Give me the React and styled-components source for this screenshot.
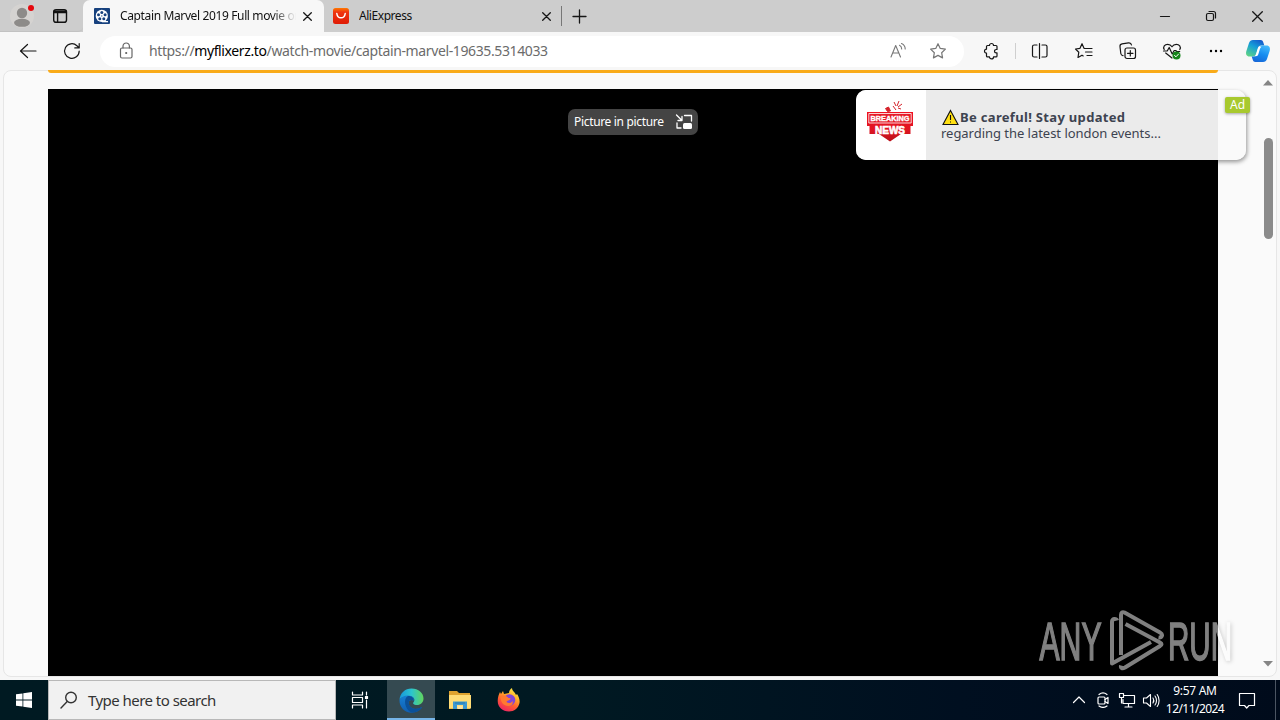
import React from "react";
import styled, { createGlobalStyle } from "styled-components";

const Global = createGlobalStyle`
  * { box-sizing: border-box; }
  html, body { margin: 0; overflow: hidden; }
  body { font-family: "Noto Sans", "Open Sans", sans-serif; color: #111; }
  svg { display: block; flex: none; }
`;

const Desktop = styled.div`
  position: relative;
  width: 1280px;
  height: 720px;
  display: flex;
  flex-direction: column;
  background: #f7f7f7;
  overflow: hidden;
`;
const TitleBar = styled.header`
  height: 32px;
  display: flex;
  background: #cdcdcd;
`;
const Leading = styled.div`
  width: 83px;
  padding: 3px 0 0 9px;
  display: flex;
  gap: 10px;
  border-bottom: 1px solid #c2c2c2;
  border-radius: 0 0 5px 0;
`;
const Tab = styled.div`
  width: ${(p) => p.$width}px;
  height: 32px;
  display: flex;
  align-items: center;
  padding: 0 ${(p) => (p.$active ? 12 : 10)}px 0 ${(p) => (p.$active ? 11 : 9)}px;
  background: ${(p) => (p.$active ? "#f7f7f7" : "transparent")};
  border-radius: ${(p) => (p.$active ? "7px 7px 0 0" : "0")};
`;
const TabTitle = styled.span`
  flex: 1;
  min-width: 0;
  margin: 0 6px 0 ${(p) => p.$gap}px;
  font-size: 12px;
  letter-spacing: ${(p) => p.$spacing}px;
  line-height: 18px;
  white-space: nowrap;
  overflow: hidden;
  mask-image: ${(p) => (p.$fade ? "linear-gradient(90deg, #000 152px, transparent 176px)" : "none")};
`;
const TabRule = styled.i`
  width: 1px;
  height: 20px;
  margin: 6px 7px 0 0;
  background: #777;
`;
const NewTabButton = styled.div`
  width: 20px;
  height: 32px;
  display: grid;
  place-items: center;
`;
const WindowButtons = styled.div`
  margin-left: auto;
  display: flex;
`;
const WindowButton = styled.div`
  width: 46px;
  height: 32px;
  display: grid;
  place-items: center;
`;
const Toolbar = styled.div`
  height: 38px;
  display: flex;
  align-items: center;
  padding: 0 2px 0 6px;
`;
const ToolButton = styled.div`
  width: ${(p) => p.$width || 44}px;
  height: 38px;
  display: grid;
  place-items: center;
`;
const ToolRule = styled.i`
  width: 1px;
  height: 16px;
  margin: 0 2px;
  background: #cfcfcf;
`;
const AddressBar = styled.div`
  width: 864px;
  height: 31px;
  margin: 0 5px 0 6px;
  padding: 0 6px 0 16px;
  display: flex;
  align-items: center;
  background: #fff;
  border-radius: 16px;
`;
const Url = styled.span`
  flex: 1;
  margin-left: 13px;
  font-size: 14px;
  letter-spacing: ${(p) => p.$spacing || 0}px;
  line-height: 20px;
  color: #6b6b6b;
  b { font-weight: 400; color: #000; }
`;
const Page = styled.main`
  height: 607px;
  margin: 0 3px;
  display: flex;
  background: #fafafa;
  border: 1px solid #e6e6e6;
  border-radius: 8px;
`;
const Content = styled.div`
  width: 1170px;
  margin: -1px 0 0 44px;
  display: flex;
  flex-direction: column;
`;
const Banner = styled.div`
  height: 3px;
  background: #f9ab19;
  border-radius: 0 0 3px 3px;
`;
const Player = styled.div`
  height: 587px;
  margin-top: 16px;
  padding-top: 20px;
  display: flex;
  justify-content: center;
  align-items: flex-start;
  background: #000;
`;
const PipButton = styled.div`
  width: 130px;
  height: 26px;
  padding: 0 5px 1px 6px;
  display: flex;
  align-items: center;
  justify-content: space-between;
  background: #444;
  border-radius: 7px;
  color: #fff;
  font-size: 12px;
  letter-spacing: -0.33px;
  white-space: nowrap;
`;
const Scrollbar = styled.div`
  width: 14px;
  margin: 0 1px 0 auto;
  padding: 9px 0 9px;
  display: flex;
  flex-direction: column;
  align-items: center;
`;
const Thumb = styled.div`
  width: 9px;
  height: 101px;
  margin: 52px 0 auto;
  border-radius: 5px;
  background: #8b8b8b;
`;
const Notice = styled.aside`
  position: absolute;
  left: 856px;
  top: 90px;
  width: 390px;
  height: 70px;
  display: flex;
  align-items: stretch;
  border-radius: 10px;
  overflow: hidden;
  background: rgba(250, 250, 250, 0.94);
  box-shadow: 1px 2px 4px rgba(0, 0, 0, 0.4);
`;
const NoticeImage = styled.div`
  width: 70px;
  padding: 9px 0 0 10px;
  background: #fff;
`;
const NoticeBody = styled.div`
  padding: 19px 0 0 15px;
  font-size: 13px;
  line-height: 16px;
  color: #3d4350;
  white-space: nowrap;
`;
const NoticeTitle = styled.div`
  height: 16px;
  display: flex;
  align-items: center;
  gap: 1px;
  font-weight: 700;
  letter-spacing: ${(p) => p.$spacing}px;
`;
const NoticeText = styled.div`
  letter-spacing: ${(p) => p.$spacing}px;
`;
const AdBadge = styled.div`
  position: absolute;
  left: 1225px;
  top: 97px;
  width: 25px;
  height: 16px;
  background: #a8c92e;
  border-radius: 2px;
  box-shadow: 0 1px 3px rgba(0, 0, 0, 0.35);
  color: #fff;
  font-size: 12px;
  line-height: 16px;
  text-align: center;
`;
const Watermark = styled.div`
  position: absolute;
  left: 1034px;
  top: 606px;
  opacity: 0.5;
  filter: drop-shadow(1px 1px 2px rgba(0, 0, 0, 0.4));
`;
const Taskbar = styled.footer`
  height: 40px;
  margin-top: auto;
  display: flex;
  background: linear-gradient(90deg, #001a22 0, #001922 45%, #000f20 75%, #000b1b 100%);
  color: #fff;
`;
const TaskButton = styled.div`
  width: ${(p) => p.$width}px;
  height: 40px;
  display: grid;
  place-items: center;
  background: ${(p) => (p.$active ? "#354a51" : "transparent")};
  box-shadow: ${(p) => (p.$active ? "inset 0 -2px #76b5e8" : "none")};
`;
const TaskView = styled.div`
  width: 51px;
  padding: 11px 0 0 15px;
`;
const SearchBox = styled.div`
  width: 288px;
  height: 40px;
  padding-left: 11px;
  display: flex;
  align-items: center;
  gap: 10px;
  background: #f1f1f1;
  border: 1px solid #b8b8b8;
  color: #333;
  font-size: 15px;
  letter-spacing: ${(p) => p.$spacing}px;
`;
const Tray = styled.div`
  margin-left: auto;
  display: flex;
`;
const Clock = styled.div`
  width: 64px;
  padding-top: 2px;
  font-size: 12px;
  line-height: 18px;
  letter-spacing: -0.55px;
  text-align: center;
  white-space: nowrap;
`;
const Time = styled.div`
  letter-spacing: -0.3px;
`;
const ShowDesktop = styled.div`
  width: 5px;
  margin-left: 8px;
  border-left: 1px solid #4b5562;
`;

const Line = ({ w = 20, h = w, color = "#161616", sw = 1.2, children }) => (
  <svg width={w} height={h} viewBox={`0 0 ${w} ${h}`} fill="none" stroke={color} strokeWidth={sw} strokeLinecap="round" strokeLinejoin="round">
    {children}
  </svg>
);
const Close = ({ size = 9 }) => (
  <Line w={size} sw={1.3}>
    <path d={`M.7 .7l${size - 1.4} ${size - 1.4}M${size - 0.7} .7L.7 ${size - 0.7}`} />
  </Line>
);
const starPath = "M10 2.7l2.25 4.7 5.15.7-3.75 3.6.9 5.15L10 14.4l-4.55 2.45.9-5.15L2.6 8.1l5.15-.7z";

const ProfileIcon = () => (
  <svg width="28" height="26" viewBox="0 0 28 26">
    <circle cx="13" cy="13" r="12" fill="#d5d3d1" />
    <circle cx="13" cy="10" r="5.2" fill="#8d8b89" />
    <ellipse cx="13" cy="19.8" rx="8" ry="4" fill="#8d8b89" />
    <circle cx="22" cy="5" r="3" fill="#e5080e" />
  </svg>
);
const WorkspaceIcon = () => (
  <Line w={26} sw={1.4} color="#111">
    <rect x="6.7" y="6.7" width="12.8" height="12.6" rx="2.4" />
    <path d="M6.8 8.3h12.6M6.8 9.5h12.6M10.6 9v10" />
  </Line>
);
const FilmIcon = () => (
  <svg width="16" height="16" viewBox="0 0 16 16">
    <rect width="16" height="16" rx="1" fill="#17417e" />
    <circle cx="7.8" cy="7.9" r="6.1" fill="#fff" />
    <path d="M8 13h6v1.3H8z" fill="#fff" />
    <g fill="#17417e">
      <circle cx="7.8" cy="4.5" r="1.5" /><circle cx="4.5" cy="6.8" r="1.5" />
      <circle cx="11.1" cy="6.8" r="1.5" /><circle cx="5.8" cy="10.7" r="1.5" />
      <circle cx="9.8" cy="10.7" r="1.5" /><circle cx="7.8" cy="7.9" r=".6" />
    </g>
  </svg>
);
const AliIcon = () => (
  <svg width="16" height="16" viewBox="0 0 16 16">
    <defs><linearGradient id="ali" x2="0" y2="1"><stop stopColor="#ff7a00" /><stop offset=".25" stopColor="#ef3510" /><stop offset="1" stopColor="#df1b05" /></linearGradient></defs>
    <rect width="16" height="16" rx="2.5" fill="url(#ali)" />
    <path d="M3.8 5.5c.7 5.7 7.7 5.7 8.4 0" fill="none" stroke="#fff" strokeWidth="1.5" strokeLinecap="round" />
  </svg>
);
const CopilotIcon = () => (
  <svg width="26" height="26" viewBox="0 0 26 26">
    <defs>
      <linearGradient id="cpA" x1=".8" y1="0" x2=".2" y2="1"><stop stopColor="#1557cc" /><stop offset=".45" stopColor="#159fd8" /><stop offset="1" stopColor="#5cd287" /></linearGradient>
      <linearGradient id="cpB" x1=".7" y1="0" x2=".3" y2="1"><stop stopColor="#42b8fb" /><stop offset=".5" stopColor="#168df0" /><stop offset="1" stopColor="#1667d8" /></linearGradient>
    </defs>
    <path d="M8 2h7.500c2 0 2.400 1.300 3 3l.8 2.600h-3c-2 0-3 1-3.600 3l-1.500 5c-.6 1.900-1.600 2.900-3.500 2.900H4.500C1.500 18.500 .5 16 1.300 13.200L4 5c.7-2 2-3 4-3z" fill="url(#cpA)" />
    <path d="M18 24h-7.500c-2 0-2.400-1.300-3-3l-.8-2.600h2c2 0 3-1 3.600-3l1.500-5c.6-1.900 1.600-2.900 3.500-2.900h4.200c3 0 4 2.500 3.200 5.300L22 21c-.7 2-2 3-4 3z" fill="url(#cpB)" />
    <path d="M15.500 8.500h-.8c-1 .3-1.400 1.100-1.800 2.300l-1.900 6c-.2.700-.6 1.200-1 1.500h.8c1.500 0 2.100-.7 2.600-2.200l1.500-5c.3-1 .8-1.800 1.600-2.300z" fill="#fff" />
  </svg>
);
const Arrow = ({ down }) => (
  <svg width="10" height="6" viewBox="0 0 10 6"><path d={down ? "M0 0h10L5 5.500z" : "M0 5.500h10L5 0z"} fill="#858585" /></svg>
);
const NewsIcon = () => (
  <svg width="48" height="44" viewBox="0 0 48 44">
    <defs><linearGradient id="news" x2="0" y2="1"><stop stopColor="#f01020" /><stop offset=".6" stopColor="#e01522" /><stop offset="1" stopColor="#b9111a" /></linearGradient></defs>
    <path d="M19.500 9.500l3-1.500 2 4-3 .5zM28 3l2 4M33 2l-2 5M36 5l-4 3M35 10l-3-1M27 7l3 4" fill="#d5222a" stroke="#d5222a" strokeWidth="1" />
    <path d="M1 13h46v14h-2.500v8H35l-11 7.500L13 35H3.500v-8H1z" fill="url(#news)" />
    <path d="M2.800 14.500h42.400v9.500H2.800z" fill="#e51b28" stroke="#fff" strokeWidth=".8" />
    <g fill="#fff" fontFamily="Liberation Sans, sans-serif" fontWeight="900" stroke="#fff">
      <text x="4.500" y="22" fontSize="8" strokeWidth=".4" textLength="39" lengthAdjust="spacingAndGlyphs">BREAKING</text>
      <text x="9" y="35" fontSize="11.500" strokeWidth=".7" textLength="30" lengthAdjust="spacingAndGlyphs">NEWS</text>
    </g>
  </svg>
);
const WarningIcon = () => (
  <svg width="18" height="17" viewBox="0 0 18 17">
    <path d="M9.500 1.500L17 15.500H2z" fill="#ffdf12" stroke="#111" strokeWidth="1.100" />
    <path d="M9.500 6v5M9.500 12.500v1" stroke="#111" strokeWidth="1.100" />
  </svg>
);
const AnyRunMark = () => (
  <svg width="216" height="70" viewBox="0 0 216 70">
    <g fill="#fff" stroke="#fff" strokeWidth="1.600" fontFamily="Liberation Sans Narrow, Liberation Sans, sans-serif" fontSize="53">
      <text x="5.500" y="54" textLength="62" lengthAdjust="spacingAndGlyphs">ANY</text>
      <text x="134" y="54" textLength="64" lengthAdjust="spacingAndGlyphs">RUN</text>
    </g>
    <g fill="none" stroke="#fff" strokeWidth="4" strokeLinejoin="round">
      <path d="M83 14.500c-.5-2.500-5-2-5 1.500v41.500L117 36" />
      <path d="M87 49V9c0-2.500 1.500-3.500 3.500-2.400L126 26.500c3.500 2 2 5.500-1.500 5" />
      <path d="M91.500 18L126 36.500c2 1 2 2.500 0 3.500L91 61.500c-3 1.700-4.500.5-4-2" />
    </g>
  </svg>
);
const WindowsIcon = () => (
  <svg width="16" height="16" viewBox="0 0 16 16" fill="#fff"><path d="M0 2.300l6.500-.9v6.100H0zM7.300 1.300L16 0v7.500H7.300zM0 8.400h6.500v6.200L0 13.700zM7.300 8.400H16V16l-8.700-1.300z" /></svg>
);
const EdgeIcon = () => (
  <svg width="25" height="25" viewBox="0 0 25 25">
    <defs>
      <linearGradient id="edA" x1="0" x2="1"><stop stopColor="#1697dc" /><stop offset=".5" stopColor="#2cc4ce" /><stop offset="1" stopColor="#62d55c" /></linearGradient>
      <linearGradient id="edB" x2="0" y2="1"><stop stopColor="#167fd3" /><stop offset="1" stopColor="#105eb0" /></linearGradient>
    </defs>
    <path d="M.5 12C1 5 6 .5 12.500.5c7 0 12 4.500 12 10 0 4-3 6.500-6.500 6.500-3.300 0-4.500-1.500-3.500-2.700 2.500-3-.5-6.300-4.500-6.300C5 8 1.500 10 .5 12z" fill="url(#edA)" />
    <path d="M.5 12C2 9 5 7.500 9 7.500c4.500 0 7 3 5.500 5-4-2-6 2-4.200 5 2.300 4 8 4.500 12.700 1.500-2.200 4-6 5.700-10.500 5.700C5.500 24.700.3 19 .5 12z" fill="url(#edB)" />
    <path d="M9 8C4 10 5.500 21.500 12.500 24.600 17 24.700 21 23 23 19c-5 2.500-10 2.500-12.500-1.500-1.800-3-.3-7 4-5C15.500 10 12 7.500 9 8z" fill="#0b5199" />
  </svg>
);
const FolderIcon = () => (
  <svg width="22" height="20" viewBox="0 0 22 20">
    <path d="M0 1h8l2 2h11v16H0z" fill="#dfa32e" />
    <path d="M0 5h22v13.500H0z" fill="#ffdc75" />
    <path d="M4 11.500h14V19h-4v-4H8v4H4z" fill="#3d99d2" /><path d="M6 13h10" stroke="#2678ad" /><path d="M8.500 16h5v3h-5z" fill="#ffe4a1" />
  </svg>
);
const FirefoxIcon = () => (
  <svg width="24" height="24" viewBox="0 0 24 24">
    <defs><linearGradient id="ff" x1=".8" y1="0" x2=".3" y2="1"><stop stopColor="#fff04b" /><stop offset=".35" stopColor="#ffae27" /><stop offset=".65" stopColor="#ff5b31" /><stop offset="1" stopColor="#ed2464" /></linearGradient></defs>
    <path d="M3 4l1 2 2-3 1 3 5-1c0-2 1-4 3-5 0 3 3 4 4 7l1-1c2 3 3 6 2.500 9C21.500 20 17 23.500 12 23.500 5.500 23.500.7 19 .7 13 .7 9 2 6 3 4z" fill="url(#ff)" />
    <circle cx="12.500" cy="12" r="5.800" fill="#8145d7" />
    <path d="M3.500 9c3-3 6-1 8 1 2 0 3 .8 1 2-2 .8-3 1-3 2 2 2 5 1 6-1 1 3-1 5-4 5-5 0-8-4-8-9z" fill="#ff7a30" />
  </svg>
);

export default function App() {
  return (
    <Desktop>
      <Global />
      <TitleBar>
        <Leading><ProfileIcon /><WorkspaceIcon /></Leading>
        <Tab $active $width={241}>
          <FilmIcon />
          <TabTitle $gap={10} $spacing={-0.37} $fade>Captain Marvel 2019 Full movie on</TabTitle>
          <Close />
        </Tab>
        <Tab $width={237}>
          <AliIcon />
          <TabTitle $gap={10} $spacing={-0.45}>AliExpress</TabTitle>
          <Close />
        </Tab>
        <TabRule />
        <NewTabButton><Line w={15} sw={1.3}><path d="M7.500 1v13M1 7.500h13" /></Line></NewTabButton>
        <WindowButtons>
          <WindowButton><Line w={12}><path d="M1.500 6.500h9" /></Line></WindowButton>
          <WindowButton><Line w={12}><rect x="1.500" y="3.500" width="7" height="7" rx="1.500" /><path d="M4 1.500h4.500a2 2 0 0 1 2 2V8" /></Line></WindowButton>
          <WindowButton><Close size={11} /></WindowButton>
        </WindowButtons>
      </TitleBar>
      <Toolbar>
        <ToolButton><Line><path d="M18 10H2.500M9.500 3.500L2.500 10l7 6.500" /></Line></ToolButton>
        <ToolButton><Line><path d="M17.200 10a7.300 7.300 0 1 1-2.300-5.300l2.200 2M17.200 2.500v4.400h-4.400" /></Line></ToolButton>
        <AddressBar>
          <Line color="#666"><rect x="4.500" y="7" width="11.500" height="10" rx="1.500" /><path d="M7 7V5.200a3.200 3.200 0 0 1 6.400 0V7" /><circle cx="10.200" cy="12" r=".5" fill="#666" /></Line>
          <Url $spacing={-0.38}>https://<b>myflixerz.to</b>/watch-movie/captain-marvel-19635.5314033</Url>
          <ToolButton $width={40}><Line color="#777" sw={1.1}><path d="M3 16L7.700 4.500 12.500 16M4.700 12h6.100M11.500 4.300c1.500.7 2.200 2 2.200 3.700M13.500 2.500c2.500 1.100 3.700 3 3.700 5.500" /></Line></ToolButton>
          <ToolButton $width={40}><Line color="#777"><path d={starPath} /></Line></ToolButton>
        </AddressBar>
        <ToolButton><Line><path d="M6.500 4.500h2a2 2 0 0 1 4 0H15c.6 0 1 .4 1 1v3h-.8a1.700 1.700 0 0 0 0 3.400h.8v3c0 .6-.4 1-1 1h-2.500a2 2 0 0 1-4 0h-2c-.6 0-1-.4-1-1v-2.700a2 2 0 0 1 0-4V5.500c0-.6.4-1 1-1z" /></Line></ToolButton>
        <ToolRule />
        <ToolButton><Line><path d="M7 4H4.200C3 4 2.500 4.500 2.500 5.500v9c0 1 .5 1.500 1.700 1.500H7M12 4h3.300c1.200 0 1.700.5 1.700 1.500v9c0 1-.5 1.500-1.700 1.500H12M9.500 2.500v15" /></Line></ToolButton>
        <ToolButton><Line><path d="M12.500 7.500L10 7.300 8 2.700 6 7.300l-4.500.7 3.300 3.200L4 16.500l4-2.300 1.200.7M13 7.500h5M11.500 11H18M13 14.500h5" /></Line></ToolButton>
        <ToolButton><Line><rect x="7" y="7" width="10.500" height="10.500" rx="2" /><path d="M12.300 9.500v5.500M9.500 12.300H15M5 14.700c-1.500-.3-2-1-2.200-2.200L2 5.800C1.800 4.200 2.500 3 4 2.800l6.500-.9c1.600-.2 2.700.5 3 2.100" /></Line></ToolButton>
        <ToolButton><Line><path d="M2.200 8.500C.7 6 2.700 3.300 5.700 3.300c2 0 3.400 1 4.300 2.500.9-1.500 2.300-2.500 4.300-2.500 3 0 5 2.700 3.500 5.200M3.700 12L10 17M1.500 10h3.700l2-3.500 3 6.500 2-3.500h1.500l1 1h3" /><circle cx="14.500" cy="14.500" r="4" fill="#16851b" stroke="none" /><path d="M12.500 14.500l1.500 1.300 2.500-2.700" stroke="#fff" strokeWidth="1" /></Line></ToolButton>
        <ToolButton><svg width="14" height="4"><circle cx="2" cy="2" r="1.200" /><circle cx="7" cy="2" r="1.200" /><circle cx="12" cy="2" r="1.200" /></svg></ToolButton>
        <ToolButton $width={40}><CopilotIcon /></ToolButton>
      </Toolbar>
      <Page>
        <Content>
          <Banner />
          <Player>
            <PipButton>Picture in picture
              <Line w={18} h={16} color="#fff" sw={1.3}><path d="M1.500 1l5.500 5.500M7 2.500v4H3M9.500 1.500h7V7M2 9v5h4" /><rect x="8" y="9" width="9" height="6" rx="1.500" fill="#fff" stroke="none" /></Line>
            </PipButton>
          </Player>
        </Content>
        <Scrollbar><Arrow /><Thumb /><Arrow down /></Scrollbar>
      </Page>
      <Notice>
        <NoticeImage><NewsIcon /></NoticeImage>
        <NoticeBody>
          <NoticeTitle $spacing={0.32}><WarningIcon />Be careful! Stay updated</NoticeTitle>
          <NoticeText $spacing={-0.03}>regarding the latest london events...</NoticeText>
        </NoticeBody>
      </Notice>
      <AdBadge>Ad</AdBadge>
      <Watermark><AnyRunMark /></Watermark>
      <Taskbar>
        <TaskButton $width={48}><WindowsIcon /></TaskButton>
        <SearchBox $spacing={-0.54}>
          <Line w={18} color="#333" sw={1.4}><circle cx="11" cy="6.500" r="5.300" /><path d="M7.200 10.500L1 17" /></Line>
          Type here to search
        </SearchBox>
        <TaskView><Line w={18} color="#fff"><path d="M1.500 1v3h10V1M1.500 17v-3h10v3M1.500 6.500h10v5h-10zM15.500 1v3M15.500 9v8" /><rect x="14.500" y="5.500" width="2" height="2" fill="#fff" /></Line></TaskView>
        <TaskButton $width={48} $active><EdgeIcon /></TaskButton>
        <TaskButton $width={49}><FolderIcon /></TaskButton>
        <TaskButton $width={49}><FirefoxIcon /></TaskButton>
        <Tray>
          <TaskButton $width={24}><Line w={14} color="#fff"><path d="M1.500 9.500L7 4l5.500 5.500" /></Line></TaskButton>
          <TaskButton $width={24}><Line w={16} color="#fff"><rect x="3" y="5" width="7" height="7" rx="1" /><path d="M10 7.500l3-2v6l-3-2M4 2.500c2.500-2 5.500-2 8 0M4 14c2.500 1.800 5.500 1.800 8 0" /></Line></TaskButton>
          <TaskButton $width={24}><Line w={18} color="#fff"><path d="M6 4.500h10.500v8H5v-4M10.500 12.500V16M7 16h7M1.500 2.500h4v4h-4zM3.500 6.500V12" /></Line></TaskButton>
          <TaskButton $width={24}><Line w={18} color="#fff" sw={1.1}><path d="M1.500 7h3l4-3.500v12L4.500 12h-3zM11 7c1 1.500 1 3.500 0 5M13 5c2 2.500 2 6.500 0 9M15.200 3.500c2.500 3.500 2.500 8.500 0 12" /></Line></TaskButton>
          <Clock><Time>9:57 AM</Time>12/11/2024</Clock>
          <TaskButton $width={40}><Line w={18} color="#fff"><path d="M1.500 2.500h15v12H11L8.700 17l-2.200-2.500h-5z" /></Line></TaskButton>
          <ShowDesktop />
        </Tray>
      </Taskbar>
    </Desktop>
  );
}
